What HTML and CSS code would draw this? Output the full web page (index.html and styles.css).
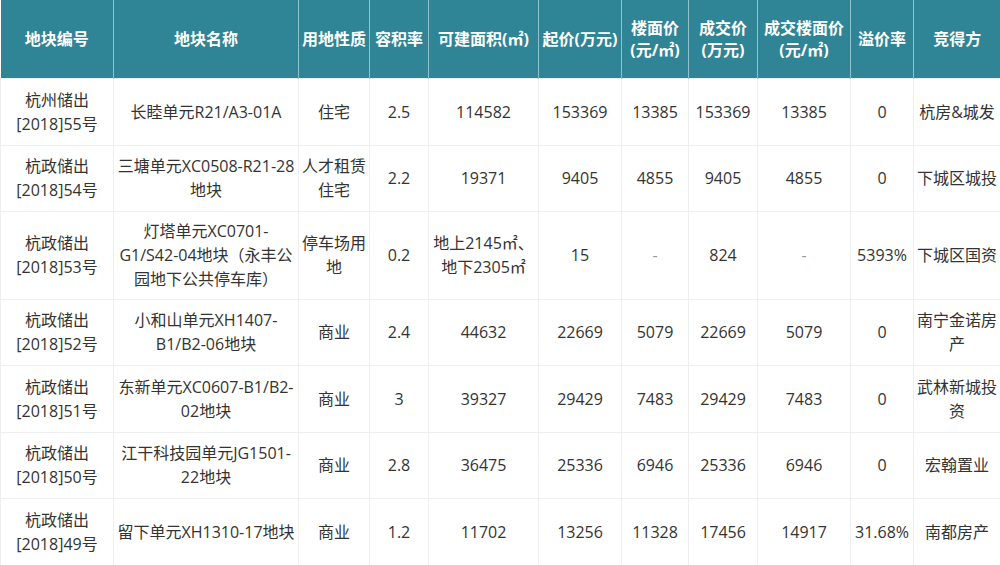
FILE: index.html
```html
<!DOCTYPE html>
<html lang="zh-CN">
<head>
<meta charset="utf-8">
<link rel="stylesheet" href="styles.css">
</head>
<body>
<table class="land">
  <colgroup>
    <col class="c-id"><col class="c-name"><col class="c-use"><col class="c-far"><col class="c-area"><col class="c-start"><col class="c-unit"><col class="c-deal"><col class="c-dealunit"><col class="c-prem"><col class="c-win">
  </colgroup>
  <thead>
    <tr class="head">
      <th>地块编号</th><th>地块名称</th><th>用地性质</th><th>容积率</th><th>可建面积(㎡)</th><th>起价(万元)</th><th>楼面价<br>(元/㎡)</th><th>成交价<br>(万元)</th><th>成交楼面价<br>(元/㎡)</th><th>溢价率</th><th>竞得方</th>
    </tr>
  </thead>
  <tbody>
    <tr class="r67">
      <td>杭州储出<br>[2018]55号</td><td>长睦单元R21/A3-01A</td><td>住宅</td><td>2.5</td><td>114582</td><td>153369</td><td>13385</td><td>153369</td><td>13385</td><td>0</td><td>杭房&amp;城发</td>
    </tr>
    <tr class="r66">
      <td>杭政储出<br>[2018]54号</td><td>三塘单元XC0508-R21-28<br>地块</td><td>人才租赁<br>住宅</td><td>2.2</td><td>19371</td><td>9405</td><td>4855</td><td>9405</td><td>4855</td><td>0</td><td>下城区城投</td>
    </tr>
    <tr class="r88">
      <td>杭政储出<br>[2018]53号</td><td>灯塔单元XC0701-<br>G1/S42-04地块（永丰公<br>园地下公共停车库）</td><td>停车场用<br>地</td><td>0.2</td><td>地上2145㎡、<br>地下2305㎡</td><td>15</td><td class="dash">-</td><td>824</td><td class="dash">-</td><td>5393%</td><td>下城区国资</td>
    </tr>
    <tr class="r66">
      <td>杭政储出<br>[2018]52号</td><td>小和山单元XH1407-<br>B1/B2-06地块</td><td>商业</td><td>2.4</td><td>44632</td><td>22669</td><td>5079</td><td>22669</td><td>5079</td><td>0</td><td>南宁金诺房<br>产</td>
    </tr>
    <tr class="r67">
      <td>杭政储出<br>[2018]51号</td><td>东新单元XC0607-B1/B2-<br>02地块</td><td>商业</td><td>3</td><td>39327</td><td>29429</td><td>7483</td><td>29429</td><td>7483</td><td>0</td><td>武林新城投<br>资</td>
    </tr>
    <tr class="r66">
      <td>杭政储出<br>[2018]50号</td><td>江干科技园单元JG1501-<br>22地块</td><td>商业</td><td>2.8</td><td>36475</td><td>25336</td><td>6946</td><td>25336</td><td>6946</td><td>0</td><td>宏翰置业</td>
    </tr>
    <tr class="r67">
      <td>杭政储出<br>[2018]49号</td><td>留下单元XH1310-17地块</td><td>商业</td><td>1.2</td><td>11702</td><td>13256</td><td>11328</td><td>17456</td><td>14917</td><td>31.68%</td><td>南都房产</td>
    </tr>
  </tbody>
</table>
</body>
</html>
```

FILE: styles.css
```css
html, body {
  margin: 0;
  padding: 0;
  background: #ffffff;
}

body {
  width: 1000px;
  height: 565px;
  overflow: hidden;
  font-family: "Open Sans", "Noto Sans CJK SC", sans-serif;
  font-size: 16px;
  color: #333333;
}

.land {
  width: 1000px;
  table-layout: fixed;
  border-collapse: collapse;
}

.c-id { width: 113px; }
.c-name { width: 185px; }
.c-use { width: 71px; }
.c-far { width: 59px; }
.c-area { width: 110px; }
.c-start { width: 83px; }
.c-unit { width: 67px; }
.c-deal { width: 69px; }
.c-dealunit { width: 93px; }
.c-prem { width: 63px; }
.c-win { width: 87px; }

.head {
  height: 78px;
  background: #2f8495;
}

.head th {
  color: #ffffff;
  font-weight: bold;
  font-size: 16px;
  line-height: 22px;
  padding: 0;
  text-align: center;
  vertical-align: middle;
  white-space: nowrap;
  border-left: 1px solid #8ec3cd;
}

.head th:first-child {
  border-left: none;
}

tbody td {
  padding: 0;
  text-align: center;
  vertical-align: middle;
  line-height: 24px;
  white-space: nowrap;
  border: 1px solid #efefef;
}

tbody td.dash {
  color: #999999;
}

.r66 { height: 66px; }
.r67 { height: 67px; }
.r88 { height: 88px; }
```
